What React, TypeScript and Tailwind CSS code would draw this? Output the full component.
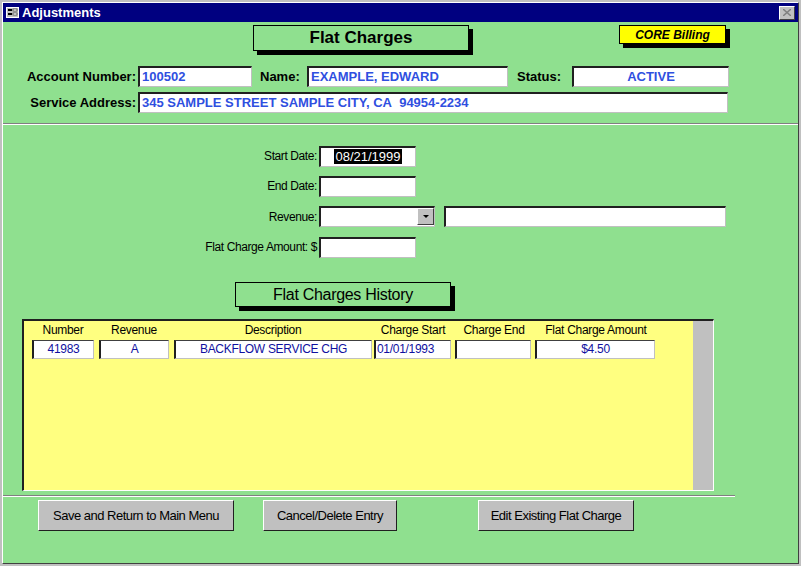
import React from 'react';

const font = { fontFamily: '"Liberation Sans", Arial, sans-serif' };

function Field({ w, children, className = '' }: { w: string; children?: React.ReactNode; className?: string }) {
  return (
    <div
      className={`${w} h-[21px] bg-white border-t-2 border-l-2 border-t-[#202020] border-l-[#202020] border-b border-r border-b-[#c0c0c0] border-r-[#c0c0c0] px-[2px] text-[13px] leading-[18px] text-[#2f4fe0] whitespace-nowrap overflow-hidden ${className}`}
    >
      {children}
    </div>
  );
}

function Cell({ w, children, className = '' }: { w: string; children?: React.ReactNode; className?: string }) {
  return (
    <div
      className={`${w} h-[19px] bg-white border-t border-l-2 border-t-[#404040] border-l-[#202020] border-b border-r border-b-[#c0c0c0] border-r-[#c0c0c0] text-[12px] leading-[17px] text-[#1010a0] text-center whitespace-nowrap overflow-hidden ${className}`}
    >
      {children}
    </div>
  );
}

function Btn({ w, children }: { w: string; children: React.ReactNode }) {
  return (
    <div className={`${w} h-[31px] bg-[#c0c0c0] border border-t-white border-l-white border-b-[#202020] border-r-[#202020] flex items-center justify-center text-[13px] tracking-[-0.5px] text-black`}>
      {children}
    </div>
  );
}

export default function App() {
  return (
    <div style={font} className="w-[801px] h-[566px] bg-[#c0c0c0] p-[2px] overflow-hidden">
      <div className="w-full h-full border border-t-white border-l-white border-b-[#404040] border-r-[#404040] flex flex-col">
        {/* title bar */}
        <div className="h-[19px] bg-[#000080] flex items-center px-[3px] text-white">
          <svg width="13" height="11" viewBox="0 0 13 11" className="mr-[3px]">
            <rect x="0.5" y="0.5" width="12" height="10" fill="#c0c0c0" stroke="#fff" />
            <rect x="2" y="2" width="4" height="2" fill="#000" />
            <rect x="2" y="6" width="4" height="2" fill="#000" />
            <rect x="7" y="2" width="4" height="2" fill="#fff" stroke="#000" strokeWidth="0.5" />
            <rect x="7" y="6" width="4" height="2" fill="#fff" stroke="#000" strokeWidth="0.5" />
          </svg>
          <span className="text-[13px] font-bold">Adjustments</span>
          <div className="ml-auto w-[16px] h-[14px] bg-[#c0c0c0] border border-t-white border-l-white border-b-[#404040] border-r-[#404040] flex items-center justify-center">
            <svg width="8" height="7" viewBox="0 0 8 7">
              <path d="M0 0L8 7M8 0L0 7" stroke="#808080" strokeWidth="1.5" />
            </svg>
          </div>
        </div>

        {/* body */}
        <div className="flex-1 bg-[#8fe08f] flex flex-col">
          {/* header boxes */}
          <div className="flex h-[42px] pt-[3px]">
            <div className="ml-[250px] w-[216px] h-[26px] border border-black bg-[#8fe08f] shadow-[4px_4px_0_#000] flex items-center justify-center text-[17px] font-bold">
              Flat Charges
            </div>
            <div className="ml-[150px] w-[107px] h-[19px] border border-black bg-[#ffff00] shadow-[4px_4px_0_#000] flex items-center justify-center text-[12px] font-bold italic">
              CORE Billing
            </div>
          </div>

          {/* account row */}
          <div className="flex items-center h-[21px] mt-[2px] text-[13px] font-bold text-black">
            <span className="ml-[13px] w-[122px] text-right pr-[2px]">Account Number:</span>
            <Field w="w-[114px]">100502</Field>
            <span className="ml-[8px] w-[47px]">Name:</span>
            <Field w="w-[201px]">EXAMPLE, EDWARD</Field>
            <span className="ml-[9px] w-[55px]">Status:</span>
            <Field w="w-[157px]" className="text-center">ACTIVE</Field>
          </div>
          <div className="flex items-center h-[21px] mt-[5px] text-[13px] font-bold text-black">
            <span className="ml-[11px] w-[124px] text-right pr-[2px]">Service Address:</span>
            <Field w="w-[590px]">345 SAMPLE STREET SAMPLE CITY, CA&nbsp; 94954-2234</Field>
          </div>

          <div className="mt-[10px] h-[2px] border-t border-t-[#808080] border-b border-b-white" />

          {/* entry fields */}
          <div className="flex flex-col gap-[10px] mt-[21px] text-[12px] tracking-[-0.4px] text-black">
            {[
              ['Start Date:', 'sel'],
              ['End Date:', ''],
            ].map(([l, v]) => (
              <div key={l} className="flex items-center h-[20px]">
                <span className="w-[316px] text-right pr-[2px]">{l}</span>
                <Field w="w-[97px]" className="h-[20px] text-center">
                  {v === 'sel' && <span className="bg-black text-white px-[1px] text-[13px] tracking-normal">08/21/1999</span>}
                </Field>
              </div>
            ))}
            <div className="flex items-center h-[21px]">
              <span className="w-[316px] text-right pr-[2px]">Revenue:</span>
              <div className="w-[116px] h-[21px] bg-white border-t-2 border-l-2 border-t-[#202020] border-l-[#202020] border-b border-r border-b-[#c0c0c0] border-r-[#c0c0c0] flex justify-end">
                <div className="w-[17px] h-[17px] bg-[#c0c0c0] border border-t-white border-l-white border-b-[#404040] border-r-[#404040] flex items-center justify-center">
                  <svg width="6" height="3" viewBox="0 0 6 3"><path d="M0 0H6L3 3Z" fill="#000" /></svg>
                </div>
              </div>
              <Field w="w-[282px]" className="ml-[9px]" />
            </div>
            <div className="flex items-center h-[20px]">
              <span className="w-[316px] text-right pr-[2px]">Flat Charge Amount: $</span>
              <Field w="w-[97px]" className="h-[20px]" />
            </div>
          </div>

          {/* history label */}
          <div className="ml-[232px] mt-[25px] w-[216px] h-[25px] border border-black bg-[#8fe08f] shadow-[4px_4px_0_#000] flex items-center justify-center text-[16px] text-black tracking-[-0.3px]">
            Flat Charges History
          </div>

          {/* grid */}
          <div className="ml-[19px] mt-[12px] w-[692px] h-[172px] border-t-2 border-l-2 border-t-[#202020] border-l-[#202020] border-b border-r border-b-white border-r-white bg-[#ffff80] flex">
            <div className="flex-1 flex flex-col text-[12px] tracking-[-0.3px]">
              <div className="flex h-[17px] mt-[1px] items-end text-black text-center">
                <span className="ml-[8px] w-[62px]">Number</span>
                <span className="ml-[4px] w-[72px]">Revenue</span>
                <span className="ml-[4px] w-[198px]">Description</span>
                <span className="ml-[2px] w-[78px]">Charge Start</span>
                <span className="ml-[2px] w-[80px]">Charge End</span>
                <span className="ml-[0px] w-[124px]">Flat Charge Amount</span>
              </div>
              <div className="flex mt-[1px]">
                <Cell w="w-[62px] ml-[8px]">41983</Cell>
                <Cell w="w-[70px] ml-[5px]">A</Cell>
                <Cell w="w-[198px] ml-[5px]">BACKFLOW SERVICE CHG</Cell>
                <Cell w="w-[77px] ml-[2px] text-left pl-[1px]">01/01/1993</Cell>
                <Cell w="w-[76px] ml-[4px]" />
                <Cell w="w-[120px] ml-[4px]">$4.50</Cell>
              </div>
            </div>
            <div className="w-[20px] h-full bg-[#c0c0c0]" />
          </div>

          <div className="mt-[4px] w-[732px] h-[2px] border-t border-t-[#808080] border-b border-b-white" />

          {/* buttons */}
          <div className="flex mt-[3px]">
            <div className="ml-[35px]"><Btn w="w-[196px]">Save and Return to Main Menu</Btn></div>
            <div className="ml-[29px]"><Btn w="w-[134px]">Cancel/Delete Entry</Btn></div>
            <div className="ml-[81px]"><Btn w="w-[156px]">Edit Existing Flat Charge</Btn></div>
          </div>
        </div>
      </div>
    </div>
  );
}
